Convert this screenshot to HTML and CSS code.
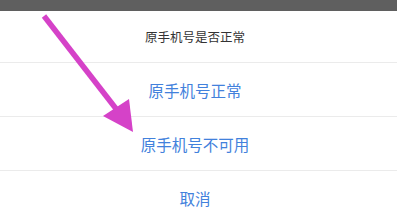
FILE: index.html
```html
<!DOCTYPE html>
<html lang="zh-CN">
<head>
    <meta charset="UTF-8">
    <meta name="viewport" content="width=device-width, initial-scale=1.0">
    <title>原手机号是否正常</title>
    <link rel="stylesheet" href="styles.css">
</head>
<body>
    <div class="mask"></div>

    <!-- action sheet -->
    <div class="sheet">
        <div class="sheet-title">原手机号是否正常</div>
        <div class="sheet-item">原手机号正常</div>
        <div class="sheet-item">原手机号不可用</div>
        <div class="sheet-item cancel">取消</div>
    </div>

    <!-- annotation arrow -->
    <svg class="arrow" width="397" height="214" viewBox="0 0 397 214">
        <line x1="44" y1="16" x2="117" y2="110" stroke="#d542c8" stroke-width="5.5"/>
        <polygon points="103,116 129,99 133,132" fill="#d542c8"/>
    </svg>
</body>
</html>
```

FILE: styles.css
```css
body {
    margin: 0;
    font-family: "Noto Sans CJK SC", "Noto Sans", sans-serif;
    background-color: #fff;
    overflow: hidden;
    position: relative;
    height: 214px;
}
.mask {
    height: 11px;
    background-color: #5f5f5f;
}
.sheet {
    background-color: #fff;
}
.sheet-title {
    height: 51px;
    display: flex;
    align-items: center;
    justify-content: center;
    padding-right: 7px;
    font-size: 12.5px;
    color: #333;
    border-bottom: 1px solid #ebebeb;
}
.sheet-item {
    height: 53px;
    display: flex;
    align-items: center;
    justify-content: center;
    padding-right: 7px;
    font-size: 15.5px;
    color: #4281dc;
    border-bottom: 1px solid #ebebeb;
}
.cancel {
    border-bottom: none;
}
.arrow {
    position: absolute;
    left: 0;
    top: 0;
}
```
